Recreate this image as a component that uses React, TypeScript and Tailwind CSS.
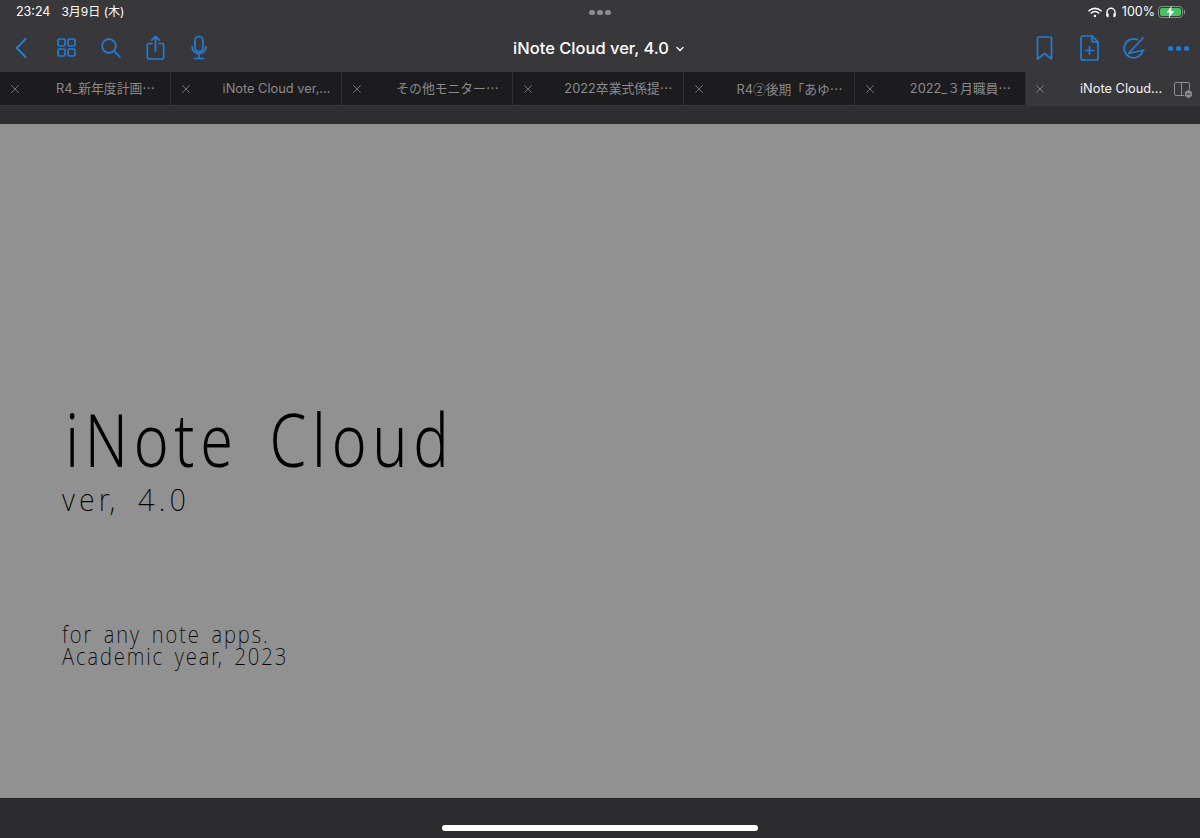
import { X } from "lucide-react";

const circled = <span className="font-['Noto_Sans_CJK_JP',sans-serif]">②</span>;

const tabs = [
  <>R4_新年度計画⋯</>,
  <>iNote Cloud ver,...</>,
  <>その他モニター⋯</>,
  <>2022卒業式係提⋯</>,
  <>R4{circled}後期「あゆ⋯</>,
  <>2022_３月職員⋯</>,
];

function ToolIcon({ w, children }: { w: number; children: React.ReactNode }) {
  return (
    <svg
      width={w}
      height={26}
      viewBox={`0 0 ${w} 26`}
      fill="none"
      stroke="#1f7ed8"
      strokeWidth="1.7"
      strokeLinecap="round"
      strokeLinejoin="round"
    >
      {children}
    </svg>
  );
}

function StatusBar() {
  return (
    <div className="grid h-[24px] grid-cols-[1fr_auto_1fr] items-center pl-4 pr-[15px] text-[13px] leading-none text-white">
      <div className="flex items-baseline gap-[11px] pt-px">
        <span className="text-[12.5px]">23:24</span>
        <span className="text-[12px]">3月9日 (木)</span>
      </div>
      <div className="flex gap-[2px] pr-[1px]">
        <span className="h-[5px] w-[6px] rounded-full bg-[#8e8e90]" />
        <span className="h-[5px] w-[6px] rounded-full bg-[#8e8e90]" />
        <span className="h-[5px] w-[6px] rounded-full bg-[#8e8e90]" />
      </div>
      <div className="flex items-center justify-end">
        <svg width="14" height="11" viewBox="0 0 14 11" fill="none" stroke="white" strokeWidth="1.6" strokeLinecap="round">
          <path d="M1 3.800C4.400 .5 9.600 .5 13 3.800" />
          <path d="M3.300 6C5.400 4.100 8.600 4.100 10.700 6" />
          <circle cx="7" cy="9" r="1.200" fill="white" stroke="none" />
        </svg>
        <svg className="ml-[4px]" width="10" height="11" viewBox="0 0 10 11" fill="none" stroke="white" strokeWidth="1.400">
          <path d="M1 9V5.200a4 4 0 0 1 8 0V9" />
          <rect x=".6" y="6.200" width="2" height="4" rx="1" fill="white" stroke="none" />
          <rect x="7.400" y="6.200" width="2" height="4" rx="1" fill="white" stroke="none" />
        </svg>
        <span className="ml-[6px] text-[12.5px]">100%</span>
        <div className="ml-[3px] flex items-center">
          <div className="relative h-[12px] w-[25px] rounded-[3.5px] border border-[#8b8b8d] p-[1px]">
            <div className="h-full w-full rounded-[2px] bg-[#3fc85b]" />
            <svg className="absolute left-[6px] top-[-1px]" width="11" height="12" viewBox="0 0 11 12">
              <path d="M6.600 0 1.600 6.600h3L3.800 12l5.400-7H6z" fill="white" />
            </svg>
          </div>
          <div className="ml-[1px] h-[4px] w-[1px] bg-[#8b8b8d]" />
        </div>
      </div>
    </div>
  );
}

function Toolbar() {
  return (
    <div className="grid h-[48px] grid-cols-[1fr_auto_1fr] items-center">
      <div className="flex items-center pl-[15px]">
        <ToolIcon w={12}>
          <path d="M10.500 4 1.800 13l8.700 9" strokeWidth="2" />
        </ToolIcon>
        <div className="ml-[30px]">
          <ToolIcon w={19}>
            <rect x="1" y="4" width="7" height="7" rx="1.500" />
            <rect x="11" y="4" width="7" height="7" rx="1.500" />
            <rect x="1" y="14" width="7" height="7" rx="1.500" />
            <rect x="11" y="14" width="7" height="7" rx="1.500" />
          </ToolIcon>
        </div>
        <div className="ml-[25px]">
          <ToolIcon w={20}>
            <circle cx="8" cy="11" r="6.900" />
            <path d="m13 16 5.800 5.800" />
          </ToolIcon>
        </div>
        <div className="ml-[25px]">
          <ToolIcon w={19}>
            <path d="M6 8.500H3a1.700 1.700 0 0 0-1.700 1.700v12.200A1.700 1.700 0 0 0 3 24h13a1.700 1.700 0 0 0 1.700-1.700V10.200A1.700 1.700 0 0 0 16 8.500h-3" />
            <path d="M9.500 16V1.500M5.700 5.200 9.500 1.400l3.800 3.800" />
          </ToolIcon>
        </div>
        <div className="ml-[26px]">
          <ToolIcon w={16}>
            <rect x="4" y="1.500" width="8" height="15" rx="4" />
            <path d="M1 11.500a7 7 0 0 0 14 0M8 18.500V23M3.500 23.500h9" />
          </ToolIcon>
        </div>
      </div>
      <div className="flex items-center pr-[3px] text-[16.5px] font-medium leading-none text-white">
        <span>iNote Cloud ver, 4.0</span>
        <svg className="ml-[7px] mt-px" width="8" height="6" viewBox="0 0 8 6" fill="none" stroke="white" strokeWidth="1.300" strokeLinecap="round" strokeLinejoin="round">
          <path d="m1 1.500 3 3 3-3" />
        </svg>
      </div>
      <div className="flex items-center justify-end pr-[11px]">
        <ToolIcon w={17}>
          <path d="M1.500 24V3.500A1.500 1.500 0 0 1 3 2h11a1.500 1.500 0 0 1 1.500 1.500V24l-7-5.500z" />
        </ToolIcon>
        <div className="ml-[27px]">
          <ToolIcon w={19}>
            <path d="M12 1H3a2 2 0 0 0-2 2v20a2 2 0 0 0 2 2h13a2 2 0 0 0 2-2V7z" />
            <path d="M12 1v4.500A1.500 1.500 0 0 0 13.500 7H18M9.500 11.500v8M5.500 15.500h8" />
          </ToolIcon>
        </div>
        <div className="ml-[24px]">
          <ToolIcon w={22}>
            <path d="M14.500 4.700A9.500 9.500 0 1 0 19.900 15.500" />
            <path d="M5.500 18.500 20 3M5.500 18.500 21 15" />
          </ToolIcon>
        </div>
        <div className="ml-[23px] flex gap-[3px]">
          <span className="h-[5px] w-[5px] rounded-full bg-[#1f7ed8]" />
          <span className="h-[5px] w-[5px] rounded-full bg-[#1f7ed8]" />
          <span className="h-[5px] w-[5px] rounded-full bg-[#1f7ed8]" />
        </div>
      </div>
    </div>
  );
}

function TabBar() {
  return (
    <div className="flex h-[34px] text-[12.8px] leading-none">
      {tabs.map((t, i) => (
        <div key={i} className="flex h-[33px] w-[171px] shrink-0 items-center border-r border-[#2f2f31] bg-[#1c1c1e] text-[#8a8a8c]">
          <div className="flex w-[30px] shrink-0 justify-center">
            <X size={14} strokeWidth={1.300} color="#8e8e90" />
          </div>
          <span className="ml-[11px] flex-1 whitespace-nowrap pt-[2px] text-center">{t}</span>
        </div>
      ))}
      <div className="flex h-[33px] flex-1 items-center text-[#f2f2f4]">
        <div className="flex w-[28px] shrink-0 justify-center">
          <X size={14} strokeWidth={1.300} color="#98989a" />
        </div>
        <span className="ml-[26px] whitespace-nowrap pt-[2px]">iNote Cloud...</span>
        <svg className="ml-[12px] mt-[2px]" width="20" height="18" viewBox="0 0 20 18" fill="none" stroke="#8e8e90" strokeWidth="1">
          <rect x=".5" y="1.500" width="15" height="13" rx="1.500" />
          <path d="M7.500 1.500V14.500" />
          <circle cx="14.500" cy="13" r="4.200" fill="#8e8e90" stroke="#38383a" />
          <path d="M12.300 13h4.400" stroke="#38383a" />
        </svg>
      </div>
    </div>
  );
}

export default function App() {
  return (
    <div className="flex h-[838px] w-[1200px] flex-col overflow-hidden bg-[#38383a] font-['Inter','Noto_Sans_CJK_JP',sans-serif]">
      <StatusBar />
      <Toolbar />
      <TabBar />
      <div className="h-[18px] bg-[#2e2e30]" />
      <main className="h-[674px] bg-[#919191] pl-[62px] pt-[274px] font-['Noto_Sans',sans-serif] text-black">
        {/* letters are squeezed and spaced out, the cover font is a narrow wide-set one */}
        <h1 className="h-[82px] origin-left scale-x-[0.8] whitespace-pre pl-[4px] text-[74px] font-light leading-[82px] tracking-[7.2px] [word-spacing:12px]">
          iNote Cloud
        </h1>
        <p className="h-[38px] origin-left scale-x-[0.9] whitespace-pre text-[32px] font-extralight leading-[38px] tracking-[4.6px] [word-spacing:8px]">
          ver, 4.0
        </p>
        <p className="mt-[105px] h-[22px] origin-left scale-x-[0.88] whitespace-pre text-[23px] font-extralight leading-[22px] tracking-[2.2px] [word-spacing:4px]">
          for any note apps.
        </p>
        <p className="h-[22px] origin-left scale-x-[0.88] whitespace-pre text-[23px] font-extralight leading-[22px] tracking-[2.2px] [word-spacing:4px]">
          Academic year, 2023
        </p>
      </main>
      <div className="flex flex-1 justify-center border-t border-[#222224] bg-[#2c2c2e] pt-[26px]">
        <div className="h-[6px] w-[316px] rounded-full bg-white" />
      </div>
    </div>
  );
}
